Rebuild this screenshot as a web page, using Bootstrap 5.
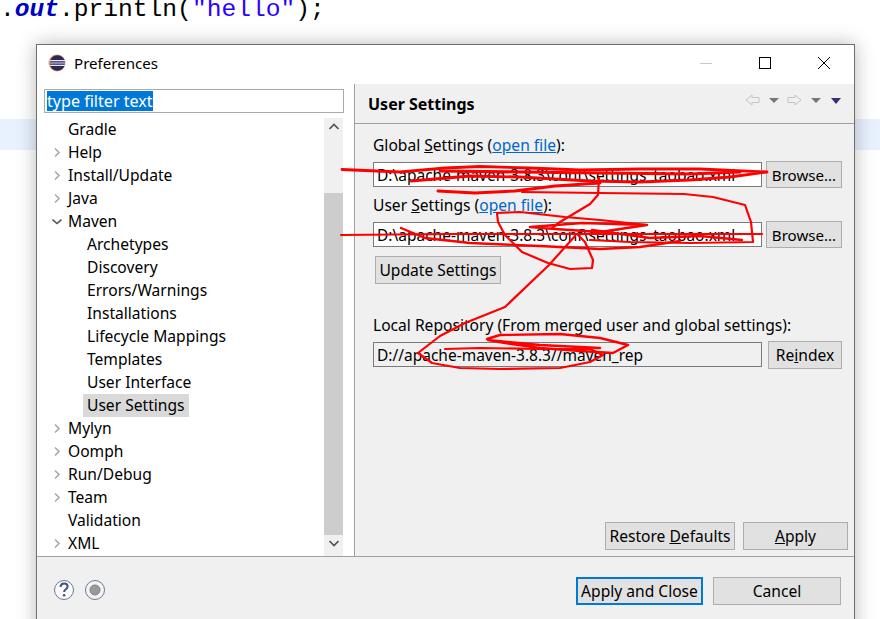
<!DOCTYPE html>
<html lang="en">
<head>
<meta charset="utf-8">
<title>Preferences</title>
<link href="https://cdn.jsdelivr.net/npm/bootstrap@5.3.0/dist/css/bootstrap.min.css" rel="stylesheet">
<style>
html,body{height:100%;overflow:hidden;background:#fff}
body{font-family:"Noto Sans","Open Sans",sans-serif;font-size:15.6px;color:#000;line-height:20px}
.code-line{font-family:"Liberation Mono",monospace;font-size:24.6px;line-height:20px;color:#000;white-space:pre;height:20px}
.code-out{color:#0000c0;font-weight:700;font-style:italic}
.code-str{color:#2a00ff}
.cur-band{height:31px;margin-top:99px;background:#e8f2fe}
.pref-win{position:absolute;left:36px;top:44px;width:819px;height:600px;background:#f0f0f0;border:1px solid #6f6f6f;box-shadow:0 0 18px rgba(0,0,0,.28)}
.title-strip{height:39px;background:#fff;padding:0 0 4px 11px;font-size:15.1px}
.win-body{height:472px}
.left-pane{width:318px;background:#fff;border-right:1px solid #a0a0a0}
.filter-box{margin:5px 10px 5px 7px;height:24px;border:1px solid #aaa;padding:1px 2px;line-height:20px;background:#fff;font-size:16.1px}
.filter-sel{background:#0078d7;color:#fff;display:inline-block;height:20px;line-height:20px}
.tree-scroll{min-height:0}
.tree-rows{width:287px;list-style:none;margin:0;padding:0;overflow:hidden}
.tree-rows li{height:23px;line-height:23px;padding-left:31px;position:relative;white-space:nowrap}
.tree-rows li.kid{padding-left:50px}
.tree-rows li.kid-sel span{background:#d9d9d9;display:inline-block;height:23px;padding:0 4px;margin-left:-4px}
.tw{position:absolute;left:15px;top:6px;width:10px;height:11px}
.sbar{width:19px;margin-right:11px;background:#f0f0f0}
.sb-top{height:75px;padding-top:5px}
.sb-thumb{height:342px;background:#cdcdcd}
.sb-bot{height:21px;padding-top:5px}
.right-pane{min-width:0}
.rp-head{height:40px;border-bottom:1px solid #a0a0a0;padding:0 12px 0 13px}
.rp-title{font-weight:700;font-size:16px}
.rp-nav{margin-bottom:8px}
.rp-form{padding:12px 12px 0 18px}
.fld-lab{height:20px;line-height:18px;white-space:nowrap}
.fld-lab.loc-lab{margin-top:32px}
.fld-row{margin-top:5px;height:27px}
.fld-box{height:25px;border:1px solid #7a7a7a;border-radius:0;background:#fff;padding:0 3px;line-height:24px;white-space:nowrap;overflow:hidden;font-size:15.5px}
.fld-box.ro{background:#f0f0f0}
.link-file{color:#0066cc}
.ec-btn{background:#e1e1e1;border:1px solid #adadad;border-radius:0;color:#000;font-size:15.6px;line-height:20px;padding:0;white-space:nowrap}
.ec-btn:hover{background:#e1e1e1;color:#000;border-color:#adadad}
.w-browse{width:76px;height:27px;font-size:15.1px}
.w-update{width:126px;height:28px;margin:8px 0 0 2px}
.w-reindex{width:74px;height:28px;margin-left:6px}
.act-row{padding:0 6px 6px 0}
.w-restore{width:130px;height:28px}
.w-apply{width:105px;height:28px}
.foot-sep{border-top:1px solid #a0a0a0;background:#f0f0f0;padding:20px 13px 0 17px}
.foot-gap{gap:10px}
.foot-ico{margin-right:11px}
.w-ac{width:127px;height:28px;border:2px solid #0078d7}
.w-ac:hover{border-color:#0078d7}
.w-cancel{width:128px;height:28px}
.scrib{position:absolute;left:0;top:0;pointer-events:none}
</style>
</head>
<body>
<div class="code-line">.<span class="code-out">out</span>.println(<span class="code-str">"hello"</span>);</div>
<div class="cur-band"></div>

<div class="pref-win d-flex flex-column">
  <div class="title-strip d-flex align-items-center">
    <svg width="18" height="18" viewBox="0 0 18 18" class="me-2" aria-hidden="true">
      <circle cx="9" cy="9" r="8.5" fill="#e8a04a"/>
      <circle cx="9.4" cy="9" r="7.7" fill="#2c2560"/>
      <path d="M1.6 6.6h15.6M1.4 9h16M1.6 11.4h15.6" stroke="#e8e8f2" stroke-width="1.1"/>
    </svg>
    <span>Preferences</span>
    <svg width="130" height="14" viewBox="0 0 130 14" class="ms-auto me-4" aria-hidden="true">
      <path d="M0 7.500h12" stroke="#c8c8c8"/>
      <rect x="59.500" y="1.500" width="11" height="11" fill="none" stroke="#000"/>
      <path d="M118 1l12 12M130 1l-12 12" stroke="#000" fill="none"/>
    </svg>
  </div>

  <div class="win-body d-flex">
    <div class="left-pane d-flex flex-column">
      <div class="filter-box"><span class="filter-sel">type filter text</span></div>
      <div class="tree-scroll d-flex flex-grow-1 justify-content-between">
        <ul class="tree-rows">
          <li>Gradle</li>
          <li><svg class="tw" viewBox="0 0 10 11"><path d="M3 1.500l4 4-4 4" fill="none" stroke="#a8a8a8" stroke-width="1.6"/></svg>Help</li>
          <li><svg class="tw" viewBox="0 0 10 11"><path d="M3 1.500l4 4-4 4" fill="none" stroke="#a8a8a8" stroke-width="1.6"/></svg>Install/Update</li>
          <li><svg class="tw" viewBox="0 0 10 11"><path d="M3 1.500l4 4-4 4" fill="none" stroke="#a8a8a8" stroke-width="1.6"/></svg>Java</li>
          <li><svg class="tw" viewBox="0 0 10 11"><path d="M0.500 3.500l4.500 4 4.500-4" fill="none" stroke="#555" stroke-width="1.6"/></svg>Maven</li>
          <li class="kid">Archetypes</li>
          <li class="kid">Discovery</li>
          <li class="kid">Errors/Warnings</li>
          <li class="kid">Installations</li>
          <li class="kid">Lifecycle Mappings</li>
          <li class="kid">Templates</li>
          <li class="kid">User Interface</li>
          <li class="kid kid-sel"><span>User Settings</span></li>
          <li><svg class="tw" viewBox="0 0 10 11"><path d="M3 1.500l4 4-4 4" fill="none" stroke="#a8a8a8" stroke-width="1.6"/></svg>Mylyn</li>
          <li><svg class="tw" viewBox="0 0 10 11"><path d="M3 1.500l4 4-4 4" fill="none" stroke="#a8a8a8" stroke-width="1.6"/></svg>Oomph</li>
          <li><svg class="tw" viewBox="0 0 10 11"><path d="M3 1.500l4 4-4 4" fill="none" stroke="#a8a8a8" stroke-width="1.6"/></svg>Run/Debug</li>
          <li><svg class="tw" viewBox="0 0 10 11"><path d="M3 1.500l4 4-4 4" fill="none" stroke="#a8a8a8" stroke-width="1.6"/></svg>Team</li>
          <li>Validation</li>
          <li><svg class="tw" viewBox="0 0 10 11"><path d="M3 1.500l4 4-4 4" fill="none" stroke="#a8a8a8" stroke-width="1.6"/></svg>XML</li>
        </ul>
        <div class="sbar d-flex flex-column">
          <div class="sb-top"><svg width="10" height="7" viewBox="0 0 10 7" class="d-block mx-auto"><path d="M0.500 6l4.500-4.500 4.500 4.500" fill="none" stroke="#555" stroke-width="1.7"/></svg></div>
          <div class="sb-thumb"></div>
          <div class="sb-bot"><svg width="10" height="7" viewBox="0 0 10 7" class="d-block mx-auto"><path d="M0.500 1l4.500 4.500 4.500-4.500" fill="none" stroke="#555" stroke-width="1.7"/></svg></div>
        </div>
      </div>
    </div>

    <div class="right-pane flex-grow-1 d-flex flex-column">
      <div class="rp-head d-flex align-items-center justify-content-between">
        <span class="rp-title">User Settings</span>
        <svg class="rp-nav" width="97" height="12" viewBox="0 0 97 12" aria-hidden="true">
          <path d="M1 6l6-5v2.500h7v5H7V11z" fill="none" stroke="#c4c4c4"/>
          <path d="M24 4h10l-5 5z" fill="#777"/>
          <path d="M56 6l-6-5v2.500h-7v5h7V11z" fill="none" stroke="#c4c4c4"/>
          <path d="M66 4h10l-5 5z" fill="#777"/>
          <path d="M86 4h10l-5 6z" fill="#3d2a78"/>
        </svg>
      </div>
      <div class="rp-form">
        <div class="fld-lab">Global <u>S</u>ettings (<a class="link-file" href="#">open file</a>):</div>
        <div class="fld-row d-flex align-items-center justify-content-between">
          <div class="fld-box flex-grow-1 me-1">D:\apache-maven-3.8.3\conf\settings_taobao.xml</div>
          <button class="btn ec-btn w-browse" type="button">Browse...</button>
        </div>
        <div class="fld-lab mt-2">User <u>S</u>ettings (<a class="link-file" href="#">open file</a>):</div>
        <div class="fld-row d-flex align-items-center justify-content-between">
          <div class="fld-box flex-grow-1 me-1">D:\apache-maven-3.8.3\conf\settings_taobao.xml</div>
          <button class="btn ec-btn w-browse" type="button">Browse...</button>
        </div>
        <button class="btn ec-btn w-update d-block" type="button">Update Settings</button>
        <div class="fld-lab loc-lab">Local Repository (From merged user and global settings):</div>
        <div class="fld-row d-flex align-items-center justify-content-between">
          <div class="fld-box ro flex-grow-1">D://apache-maven-3.8.3//maven_rep</div>
          <button class="btn ec-btn w-reindex" type="button">Re<u>i</u>ndex</button>
        </div>
      </div>
      <div class="act-row mt-auto d-flex justify-content-end gap-2">
        <button class="btn ec-btn w-restore" type="button">Restore <u>D</u>efaults</button>
        <button class="btn ec-btn w-apply" type="button"><u>A</u>pply</button>
      </div>
    </div>
  </div>

  <div class="foot-sep flex-grow-1 d-flex align-items-start">
    <svg class="foot-ico" width="20" height="28" viewBox="0 0 20 28" aria-hidden="true">
      <circle cx="10" cy="13" r="9.500" fill="#fafafa" stroke="#6a7a9a"/>
      <path d="M6.500 10c.3-2.400 1.800-3.500 3.600-3.500 2.100 0 3.500 1.300 3.500 3 0 2.700-3.500 2.800-3.500 5.500" fill="none" stroke="#3f5278" stroke-width="2"/>
      <circle cx="10.100" cy="18.300" r="1.300" fill="#3f5278"/>
    </svg>
    <svg width="20" height="28" viewBox="0 0 20 28" aria-hidden="true">
      <circle cx="10" cy="13" r="9.500" fill="#f4f4f4" stroke="#6a7a9a"/>
      <circle cx="10" cy="13" r="5" fill="#9a9a9a" stroke="#808080"/>
    </svg>
    <div class="ms-auto d-flex foot-gap">
      <button class="btn ec-btn w-ac" type="button">Apply and Close</button>
      <button class="btn ec-btn w-cancel" type="button">Cancel</button>
    </div>
  </div>
</div>

<svg class="scrib" width="880" height="619" viewBox="0 0 880 619" fill="none" stroke="#f00" stroke-linejoin="round" stroke-linecap="round" aria-hidden="true">
  <path stroke-width="2.800" d="M342 169.500L400 172L445 168L480 166.500L530 168L580 170L640 169L700 169L767 172L730 177L690 180L640 182L590 181L520 177L470 176L411 181"/>
  <path stroke-width="3" d="M440 171L520 172L600 173L690 174L740 172"/>
  <path stroke-width="3" d="M438 191L475 193L515 191L555 186L600 183"/>
  <path stroke-width="2.200" d="M599 178L598 195L590 204L575 213L560 222L552 228"/>
  <path stroke-width="2.200" d="M522 192L600 193L684 194L713 197L745 205L751 222L753 242L690 243L630 242L590 240"/>
  <path stroke-width="2.200" d="M341 235L450 234L600 234L762 234"/>
  <path stroke-width="2.400" d="M401 228L425 238L470 243L540 246L600 249L640 247L680 241"/>
  <path stroke-width="2.400" d="M592 230L650 238L700 236L742 240"/>
  <path stroke-width="2.400" d="M530 227L582 223L647 225L600 232L555 229L530 227"/>
  <path stroke-width="2.200" d="M497 213L520 212L565 217L600 220L647 225M497 213L498 222L505 235L522 252L548 263L570 269L592 268L593 260L585 242L578 235"/>
  <path stroke-width="2.200" d="M575 236L549 265L505 307L465 323L440 336L418 353L432 363L460 368L500 369L560 368L590 362L603 355L590 349L540 349L480 348L445 349"/>
  <path stroke-width="2.400" d="M487 339L500 335L560 334L600 338L628 345L613 353L580 351L540 348L505 343L488 340L540 345L600 348"/>
</svg>
<script src="https://cdn.jsdelivr.net/npm/bootstrap@5.3.0/dist/js/bootstrap.bundle.min.js"></script>
</body>
</html>
